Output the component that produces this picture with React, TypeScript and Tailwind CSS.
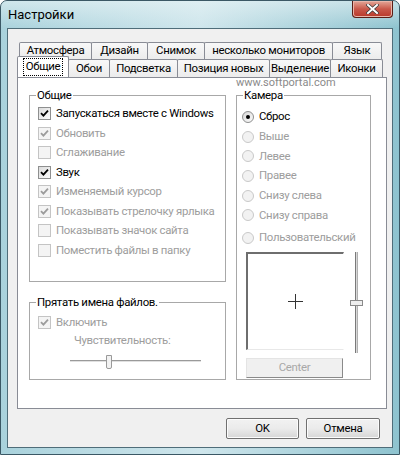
import React from "react";

const FONT = { fontFamily: 'Roboto, "Noto Sans", sans-serif' };

function Check({ checked, disabled }: { checked?: boolean; disabled?: boolean }) {
  return (
    <span
      className={
        "relative flex h-[13px] w-[13px] shrink-0 items-center justify-center border " +
        (disabled
          ? "border-[#c4c4c4] bg-[#f4f4f4]"
          : "border-[#8e8f8f] bg-gradient-to-br from-[#dcdcdc] to-[#fbfbfb]")
      }
    >
      {checked && (
        <svg width="9" height="9" viewBox="0 0 9 9">
          <path
            d="M1 4.2 L3.4 6.6 L8 1.6"
            fill="none"
            stroke={disabled ? "#9c9c9c" : "#000"}
            strokeWidth="1.8"
          />
        </svg>
      )}
    </span>
  );
}

function Radio({ checked, disabled }: { checked?: boolean; disabled?: boolean }) {
  return (
    <span
      className={
        "flex h-[12px] w-[12px] shrink-0 items-center justify-center rounded-full border " +
        (disabled
          ? "border-[#c9c9c9] bg-[#f2f2f2]"
          : "border-[#8e8f8f] bg-gradient-to-br from-[#d8d8d8] to-[#fbfbfb]")
      }
    >
      {checked && <span className="h-[4px] w-[4px] rounded-full bg-black" />}
    </span>
  );
}

function Group({
  label,
  className,
  children,
}: {
  label: string;
  className: string;
  children?: React.ReactNode;
}) {
  return (
    <div className={"relative border border-[#a8a8a8] " + className}>
      <span className="absolute left-[6px] top-[-8px] whitespace-nowrap bg-white px-[1px] text-[11.4px] leading-[14px] tracking-[-0.3px] text-black">
        {label}
      </span>
      {children}
    </div>
  );
}

function CheckRow({ label, checked, disabled }: { label: string; checked?: boolean; disabled?: boolean }) {
  return (
    <div className="flex h-[19.5px] items-center gap-[5px]">
      <Check checked={checked} disabled={disabled} />
      <span
        className={
          "whitespace-nowrap text-[11.4px] leading-none tracking-[-0.3px] " +
          (disabled ? "text-[#9d9d9d]" : "text-black")
        }
      >
        {label}
      </span>
    </div>
  );
}

function RadioRow({ label, checked, disabled }: { label: string; checked?: boolean; disabled?: boolean }) {
  return (
    <div className="flex h-[19.7px] items-center gap-[5px]">
      <Radio checked={checked} disabled={disabled} />
      <span
        className={
          "whitespace-nowrap text-[11.4px] leading-none tracking-[-0.3px] " +
          (disabled ? "text-[#9d9d9d]" : "text-black")
        }
      >
        {label}
      </span>
    </div>
  );
}

function Tab({ label, w, extra }: { label: string; w: string; extra?: string }) {
  return (
    <div
      className={
        "-mr-px flex items-center justify-center whitespace-nowrap rounded-t-[2px] border border-b-0 border-[#898c95] bg-gradient-to-b from-[#f8f8f8] to-[#ececec] text-[11.4px] leading-none tracking-[-0.3px] text-black " +
        w +
        " " +
        (extra ?? "")
      }
    >
      {label}
    </div>
  );
}

function Button({ label, className }: { label: string; className: string }) {
  return (
    <div
      className={
        "flex items-center justify-center rounded-[2px] border border-[#707070] bg-gradient-to-b from-[#f2f2f2] via-[#ebebeb] to-[#d6d6d6] text-[11.4px] tracking-[-0.3px] text-black shadow-[inset_0_0_0_1px_#fcfcfc] " +
        className
      }
    >
      {label}
    </div>
  );
}

export default function App() {
  return (
    <div
      className="relative flex h-[455px] w-[400px] flex-col overflow-hidden rounded-t-[7px] border border-[#3b5865] bg-gradient-to-r from-[#a9d2dc] via-[#cfe6ec] to-[#8ec3cf]"
      style={FONT}
    >
      {/* title bar */}
      <div className="flex h-[27px] shrink-0 items-start justify-between bg-gradient-to-b from-[#e9f4f6]/60 to-transparent">
        <span className="ml-[7px] mt-[6px] text-[13px] leading-[15px] text-black">Настройки</span>
        <div className="mr-[6px] flex h-[17px] w-[41px] items-center justify-center rounded-b-[4px] border border-t-0 border-[#5a1e16] bg-gradient-to-b from-[#e3a799] via-[#c9584a] to-[#b8382a] shadow-[inset_0_0_0_1px_#e9b6aa]">
          <svg width="13" height="10" viewBox="0 0 13 10">
            <path d="M2 1 L11 9 M11 1 L2 9" stroke="#3a3a3a" strokeWidth="3.4" strokeLinecap="square" />
            <path d="M2 1 L11 9 M11 1 L2 9" stroke="#ffffff" strokeWidth="2" strokeLinecap="square" />
          </svg>
        </div>
      </div>

      {/* client */}
      <div className="relative mx-[6px] flex h-[420px] flex-col border border-[#4f6d79] bg-[#f0f0f0]">
        {/* tabs */}
        <div className="ml-[9px] mt-[13px] flex h-[17px] pl-[2px]">
          <Tab label="Атмосфера" w="w-[73px]" />
          <Tab label="Дизайн" w="w-[57px]" />
          <Tab label="Снимок" w="w-[58px]" />
          <Tab label="несколько мониторов" w="w-[129px]" />
          <Tab label="Язык" w="w-[50px]" />
        </div>
        <div className="relative z-10 ml-[9px] flex h-[18px] items-end pl-[2px]">
          <div className="-ml-[2px] -mr-[1px] flex h-[21px] w-[52px] items-center justify-center rounded-t-[2px] border border-b-0 border-[#898c95] bg-white text-[11.4px] leading-none tracking-[-0.3px] text-black">
            <span className="border border-dotted border-black px-[2px] py-[2px]">Общие</span>
          </div>
          <Tab label="Обои" w="w-[42px] h-[18px]" />
          <Tab label="Подсветка" w="w-[69px] h-[18px]" />
          <Tab label="Позиция новых" w="w-[93px] h-[18px]" />
          <Tab label="Выделение" w="w-[62px] h-[18px]" />
          <Tab label="Иконки" w="w-[53px] h-[18px]" />
        </div>

        {/* panel */}
        <div className="ml-[9px] flex h-[332px] w-[370px] gap-[10px] border border-[#898c95] bg-white pl-[11px] pt-[17px]">
          <div className="flex w-[197px] flex-col gap-[20px]">
            <Group label="Общие" className="h-[187px] pl-[8px] pt-[8px]">
              <CheckRow label="Запускаться вместе с Windows" checked />
              <CheckRow label="Обновить" checked disabled />
              <CheckRow label="Сглаживание" disabled />
              <CheckRow label="Звук" checked />
              <CheckRow label="Изменяемый курсор" checked disabled />
              <CheckRow label="Показывать стрелочку ярлыка" checked disabled />
              <CheckRow label="Показывать значок сайта" disabled />
              <CheckRow label="Поместить файлы в папку" disabled />
            </Group>
            <Group label="Прятать имена файлов." className="h-[78px] pl-[8px] pt-[10px]">
              <CheckRow label="Включить" checked disabled />
              <div className="ml-[36px] mt-[2px] whitespace-nowrap text-[11.4px] leading-none tracking-[-0.3px] text-[#9d9d9d]">
                Чувствительность:
              </div>
              <div className="relative ml-[32px] mt-[9px] h-[14px] w-[131px]">
                <div className="absolute left-0 right-0 top-[5px] h-[3px] border-b border-t border-b-white border-t-[#9a9a9a] bg-[#e0e0e0]" />
                <div className="absolute left-[36px] top-0 h-[14px] w-[6px] rounded-b-[2px] border border-[#9a9a9a] bg-[#f2f2f2]" />
              </div>
            </Group>
          </div>

          <Group label="Камера" className="h-[285px] w-[135px] pl-[5px] pt-[11px]">
            <RadioRow label="Сброс" checked />
            <RadioRow label="Выше" disabled />
            <RadioRow label="Левее" disabled />
            <RadioRow label="Правее" disabled />
            <RadioRow label="Снизу слева" disabled />
            <RadioRow label="Снизу справа" disabled />
            <div className="mt-[3px]">
              <RadioRow label="Пользовательский" disabled />
            </div>
            <div className="ml-[4px] mt-[4px] flex gap-[6px]">
              <div className="relative flex h-[98px] w-[98px] items-center justify-center border-b border-l-2 border-r border-t-2 border-b-[#e8e8e8] border-l-[#6e6e6e] border-r-white border-t-[#6e6e6e] bg-white">
                <svg width="15" height="15" viewBox="0 0 15 15">
                  <path d="M7.5 0 V15 M0 7.5 H15" stroke="#333" strokeWidth="1" />
                </svg>
              </div>
              <div className="relative h-[101px] w-[14px]">
                <div className="absolute bottom-0 left-[5px] top-0 w-[3px] border-l border-r border-l-[#7a7a7a] border-r-[#b0b0b0] bg-[#d8d8d8]" />
                <div className="absolute left-0 top-[48px] h-[6px] w-[13px] border border-[#8a8a8a] bg-[#eeeeee]" />
              </div>
            </div>
            <div className="ml-[4px] mt-[5px] flex h-[20px] w-[97px] items-center justify-center border border-b-[#8a8a8a] border-l-[#e4e4e4] border-r-[#8a8a8a] border-t-[#e4e4e4] bg-[#f0f0f0] text-[11.4px] tracking-[-0.3px] text-[#a8a8a8]">
              Center
            </div>
          </Group>
        </div>

        {/* buttons */}
        <div className="mr-[12px] mt-[9px] flex justify-end gap-[7px]">
          <Button label="OK" className="h-[21px] w-[73px]" />
          <Button label="Отмена" className="h-[21px] w-[74px]" />
        </div>

        <span className="absolute left-[228px] top-[48px] whitespace-nowrap text-[11px] leading-none text-[#8a8a8a]">
          www.softportal.com
        </span>
      </div>
    </div>
  );
}
